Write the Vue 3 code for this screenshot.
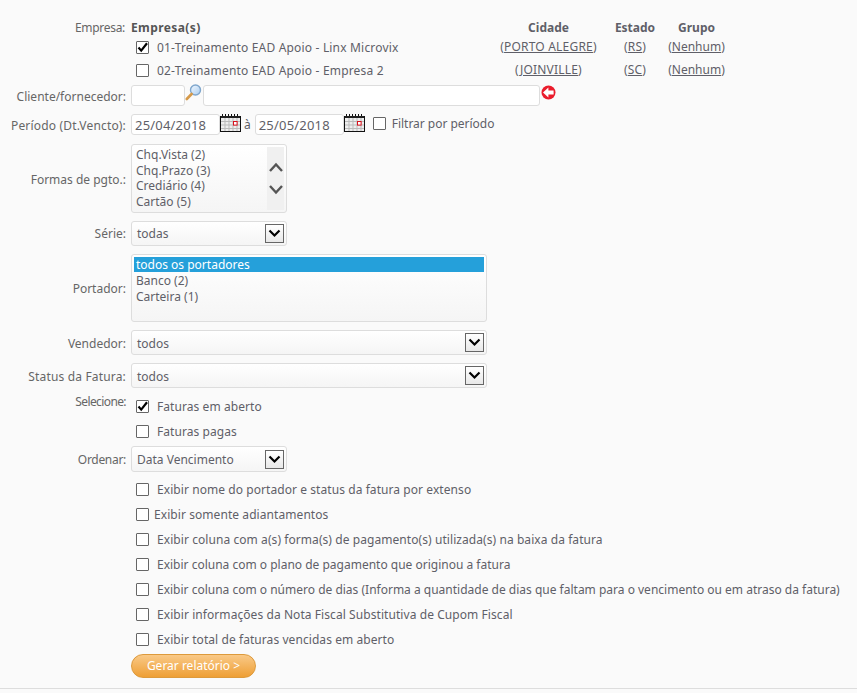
<script setup>
const empresas = [
  { nome: '01-Treinamento EAD Apoio - Linx Microvix', cidade: 'PORTO ALEGRE', uf: 'RS', grupo: 'Nenhum', on: true },
  { nome: '02-Treinamento EAD Apoio - Empresa 2', cidade: 'JOINVILLE', uf: 'SC', grupo: 'Nenhum', on: false }
]
const formas = ['Chq.Vista (2)', 'Chq.Prazo (3)', 'Crediário (4)', 'Cartão (5)']
const portadores = ['todos os portadores', 'Banco (2)', 'Carteira (1)']
const extras = [
  { t: 'Exibir nome do portador e status da fatura por extenso', cls: 'wide' },
  { t: 'Exibir somente adiantamentos', cls: 'tight' },
  { t: 'Exibir coluna com a(s) forma(s) de pagamento(s) utilizada(s) na baixa da fatura', cls: 'wide' },
  { t: 'Exibir coluna com o plano de pagamento que originou a fatura', cls: '' },
  { t: 'Exibir coluna com o número de dias (Informa a quantidade de dias que faltam para o vencimento ou em atraso da fatura)', cls: '' },
  { t: 'Exibir informações da Nota Fiscal Substitutiva de Cupom Fiscal', cls: 'wide' },
  { t: 'Exibir total de faturas vencidas em aberto', cls: 'wide' }
]
</script>

<template>
  <div class="page">
    <div class="row r-empresa">
      <div class="label lab-top lab-narrow">Empresa:</div>
      <div class="emp">
        <div class="emp-row emp-head">
          <b class="c-nome head-nome">Empresa(s)</b><b class="c-mid">Cidade</b><b class="c-mid">Estado</b><b class="c-mid">Grupo</b>
        </div>
        <div v-for="e in empresas" :key="e.nome" class="emp-row emp-item">
          <span class="c-nome chk-line">
            <span class="chk" :class="{ on: e.on }">
              <svg v-if="e.on" width="13" height="13" viewBox="0 0 13 13"><path d="M2.5 6.5 L5.2 9.6 L11 2.2" fill="none" stroke="#000" stroke-width="2.2"/></svg>
            </span>
            <span class="emp-nome">{{ e.nome }}</span>
          </span>
          <a class="c-mid link">(<u>{{ e.cidade }}</u>)</a>
          <a class="c-mid link">(<u>{{ e.uf }}</u>)</a>
          <a class="c-mid link link-grupo">(<u>{{ e.grupo }}</u>)</a>
        </div>
      </div>
    </div>

    <div class="row r-cliente">
      <div class="label">Cliente/fornecedor:</div>
      <div class="ctl-line">
        <div class="box w-code"></div>
        <svg class="lupa" width="17" height="18" viewBox="0 0 17 18">
          <defs>
            <linearGradient id="lens" x1="0" y1="0" x2="1" y2="1">
              <stop offset="0" stop-color="#f2f8ff"/>
              <stop offset="1" stop-color="#a9cdf0"/>
            </linearGradient>
          </defs>
          <circle cx="10.5" cy="6" r="5" fill="url(#lens)" stroke="#7fa6cc" stroke-width="1.4"/>
          <path d="M6.6 10 L1.8 15" stroke="#d69a4a" stroke-width="2.6" stroke-linecap="round"/>
        </svg>
        <div class="box w-name"></div>
        <svg class="voltar" width="15" height="15" viewBox="0 0 15 15">
          <circle cx="7.5" cy="7.5" r="7" fill="#ea1c2c"/>
          <path d="M2 7.5 L7.4 2.6 V5.4 H12.6 V9.6 H7.4 V12.4 Z" fill="#fff"/>
        </svg>
      </div>
    </div>

    <div class="row r-periodo">
      <div class="label lab-wide">Período (Dt.Vencto):</div>
      <div class="ctl-line">
        <div class="box w-date">25/04/2018</div>
        <svg class="cal" width="21" height="18" viewBox="0 0 21 18">
          <rect x="0.5" y="2.5" width="20" height="15" fill="#eee" stroke="#111"/>
          <path d="M1 7.5H20M1 11H20M1 14.5H20M5 3V17M9 3V17M13 3V17M17 3V17" stroke="#bbb" stroke-width="1"/>
          <path d="M2.5 0V3M5.5 0V3M8.5 0V3M11.5 0V3M14.5 0V3M17.5 0V3" stroke="#111" stroke-width="1"/>
          <rect x="1" y="2" width="19" height="2" fill="#222"/>
          <rect x="13.5" y="7.5" width="3.6" height="3.6" fill="#fff" stroke="#d8101c"/>
        </svg>
        <span class="a-sep">à</span>
        <div class="box w-date">25/05/2018</div>
        <svg class="cal" width="21" height="18" viewBox="0 0 21 18">
          <rect x="0.5" y="2.5" width="20" height="15" fill="#eee" stroke="#111"/>
          <path d="M1 7.5H20M1 11H20M1 14.5H20M5 3V17M9 3V17M13 3V17M17 3V17" stroke="#bbb" stroke-width="1"/>
          <path d="M2.5 0V3M5.5 0V3M8.5 0V3M11.5 0V3M14.5 0V3M17.5 0V3" stroke="#111" stroke-width="1"/>
          <rect x="1" y="2" width="19" height="2" fill="#222"/>
          <rect x="13.5" y="7.5" width="3.6" height="3.6" fill="#fff" stroke="#d8101c"/>
        </svg>
        <span class="chk chk-filtro"></span>
        <span class="filtro">Filtrar por período</span>
      </div>
    </div>

    <div class="row r-formas">
      <div class="label">Formas de pgto.:</div>
      <div class="box listbox w-sel">
        <div class="opts">
          <div v-for="f in formas" :key="f" class="opt">{{ f }}</div>
        </div>
        <div class="scroll">
          <svg width="16" height="12" viewBox="0 0 16 12"><path d="M2 10 L8 3.5 L14 10" fill="none" stroke="#555" stroke-width="2.4"/></svg>
          <svg width="16" height="12" viewBox="0 0 16 12"><path d="M2 2 L8 8.5 L14 2" fill="none" stroke="#555" stroke-width="2.4"/></svg>
        </div>
      </div>
    </div>

    <div class="row r-serie">
      <div class="label lab-plain">Série:</div>
      <div class="box select w-sel">
        <span>todas</span>
        <span class="arrow"><svg width="13" height="9" viewBox="0 0 13 9"><path d="M1.5 1.5 L6.5 6.5 L11.5 1.5" fill="none" stroke="#000" stroke-width="2.2"/></svg></span>
      </div>
    </div>

    <div class="row r-portador">
      <div class="label">Portador:</div>
      <div class="box listbox w-wide list-port">
        <div v-for="(p, i) in portadores" :key="p" class="opt" :class="{ sel: i === 0 }">{{ p }}</div>
      </div>
    </div>

    <div class="row r-vend">
      <div class="label">Vendedor:</div>
      <div class="box select w-wide">
        <span class="low">todos</span>
        <span class="arrow"><svg width="13" height="9" viewBox="0 0 13 9"><path d="M1.5 1.5 L6.5 6.5 L11.5 1.5" fill="none" stroke="#000" stroke-width="2.2"/></svg></span>
      </div>
    </div>

    <div class="row r-status">
      <div class="label lab-wide">Status da Fatura:</div>
      <div class="box select w-wide">
        <span class="low">todos</span>
        <span class="arrow"><svg width="13" height="9" viewBox="0 0 13 9"><path d="M1.5 1.5 L6.5 6.5 L11.5 1.5" fill="none" stroke="#000" stroke-width="2.2"/></svg></span>
      </div>
    </div>

    <div class="row r-selecione">
      <div class="label lab-top lab-narrower">Selecione:</div>
      <div class="checks">
        <div class="chk-row wide">
          <span class="chk on"><svg width="13" height="13" viewBox="0 0 13 13"><path d="M2.5 6.5 L5.2 9.6 L11 2.2" fill="none" stroke="#000" stroke-width="2.2"/></svg></span>
          <span>Faturas em aberto</span>
        </div>
        <div class="chk-row wide">
          <span class="chk"></span>
          <span>Faturas pagas</span>
        </div>
      </div>
    </div>

    <div class="row r-ordenar">
      <div class="label lab-narrow">Ordenar:</div>
      <div class="box select w-ord">
        <span class="low">Data Vencimento</span>
        <span class="arrow"><svg width="13" height="9" viewBox="0 0 13 9"><path d="M1.5 1.5 L6.5 6.5 L11.5 1.5" fill="none" stroke="#000" stroke-width="2.2"/></svg></span>
      </div>
    </div>

    <div class="extras">
      <div v-for="x in extras" :key="x.t" class="chk-row" :class="x.cls">
        <span class="chk"></span>
        <span>{{ x.t }}</span>
      </div>
    </div>

    <button class="gerar" type="button">Gerar relatório &gt;</button>
    <div class="rule"></div>
  </div>
</template>

<style>
html, body { margin: 0; background: #fafafa; }
</style>

<style scoped>
.page {
  width: 857px;
  height: 693px;
  overflow: hidden;
  box-sizing: border-box;
  padding-top: 20px;
  background: #fafafa;
  color: #5f5f68;
  font-family: "Noto Sans", "Open Sans", sans-serif;
  font-size: 12px;
  line-height: 16px;
}
.row { display: flex; align-items: center; gap: 5px; }
.label { box-sizing: border-box; width: 126px; flex: none; padding-top: 2px; text-align: right; color: #666; white-space: nowrap; }
.lab-top { align-self: flex-start; padding-top: 0; }
.lab-plain { padding-top: 0; }
.lab-wide { letter-spacing: 0.17px; }
.lab-narrow { letter-spacing: -0.3px; }
.lab-narrower { letter-spacing: -0.6px; }

.r-empresa { align-items: flex-start; gap: 6px; }
.r-empresa .label { width: 125px; }
.emp { width: 600px; }
.emp-row { display: grid; grid-template-columns: 359px 117px 56px 67px; align-items: center; }
.emp-head { height: 16px; color: #555; }
.emp-head b { font-weight: 700; }
.head-nome { letter-spacing: 0.4px; }
.emp-item { height: 23px; }
.emp-nome { letter-spacing: 0.18px; }
.c-mid { text-align: center; white-space: nowrap; color: #5f5f68; }
.link { padding-bottom: 2px; letter-spacing: 0.2px; }
.link-grupo { letter-spacing: 0; }
.chk-line { display: flex; align-items: center; padding-left: 5px; }
.chk-line .chk { margin-right: 8px; }

.chk {
  width: 11px; height: 11px; flex: none;
  border: 1px solid #666; border-radius: 1px; background: #fff;
  display: inline-flex; align-items: center; justify-content: center;
}
.chk svg { flex: none; margin: -1px; }

.box {
  box-sizing: border-box;
  border: 1px solid #ddd;
  border-radius: 3px;
  background: linear-gradient(#fff, #f5f5f5);
  flex: none;
}
.ctl-line { display: flex; align-items: center; }
.r-cliente { margin-top: 3px; }
.r-periodo { margin-top: 8px; }
.w-code { width: 54px; height: 21px; background: #fff; }
.lupa { flex: none; margin: -5px 1px 0 0; }
.w-name { width: 337px; height: 21px; background: #fff; }
.voltar { flex: none; margin: -6px 0 0 1px; }
.w-date { width: 89px; height: 21px; padding: 2px 0 0 3px; font-size: 13px; letter-spacing: 0.2px; background: #fff; }
.cal { flex: none; margin: -4px 0 0 0; }
.a-sep { margin: 0 4px 0 3px; }
.chk-filtro { margin-left: 8px; margin-top: -3px; }
.filtro { margin-left: 6px; margin-top: -2px; letter-spacing: -0.02px; }

.r-formas { margin-top: 9px; }
.w-sel { width: 156px; }
.listbox { position: relative; }
.r-formas .listbox { height: 69px; display: flex; padding: 2px 2px 2px 3px; }
.opts { flex: 1; padding-left: 1px; }
.opt { height: 15.5px; line-height: 15.5px; white-space: nowrap; }
.scroll {
  width: 17px; background: #f0f0f0;
  display: flex; flex-direction: column; align-items: center; justify-content: center; gap: 11px;
}

.select { display: flex; align-items: center; justify-content: space-between; padding: 0 2px 0 5px; }
.low { padding-top: 2px; }
.r-serie { margin-top: 8px; }
.r-serie .select, .r-vend .select, .r-status .select { height: 25px; }
.arrow {
  box-sizing: border-box;
  width: 19px; height: 19px;
  border: 1px solid #666;
  background: linear-gradient(#fff, #e8e8e8);
  display: flex; align-items: center; justify-content: center;
}

.r-portador { margin-top: 8px; }
.w-wide { width: 356px; }
.list-port { height: 68px; padding: 2px; }
.list-port .opt { height: 16px; line-height: 16px; padding-left: 2px; }
.list-port .opt.sel { background: #25a0da; color: #fff; height: 15px; line-height: 15px; margin-bottom: 1px; }
.r-vend, .r-status { margin-top: 8px; }

.r-selecione { margin-top: 6px; align-items: flex-start; }
.checks { padding-left: 5px; }
.chk-row { height: 25px; display: flex; align-items: center; white-space: nowrap; }
.chk-row.wide { letter-spacing: 0.07px; }
.chk-row .chk { margin-right: 8px; }
.chk-row.tight .chk { margin-right: 5px; }
.chk-row.tight { letter-spacing: 0.07px; }

.r-ordenar { margin-top: 2px; }
.w-ord { width: 156px; height: 26px; }

.extras { margin: 5px 0 0 136px; }
.gerar {
  display: block;
  box-sizing: border-box;
  width: 125px; height: 24px;
  margin: 2px 0 0 131px;
  border: 1px solid #dd9a3c;
  border-radius: 12px;
  background: linear-gradient(#f9c987, #ee9f35);
  color: #fff;
  font: inherit;
  padding: 0;
}
.rule { height: 1px; background: #ddd; margin-top: 10px; }
</style>
